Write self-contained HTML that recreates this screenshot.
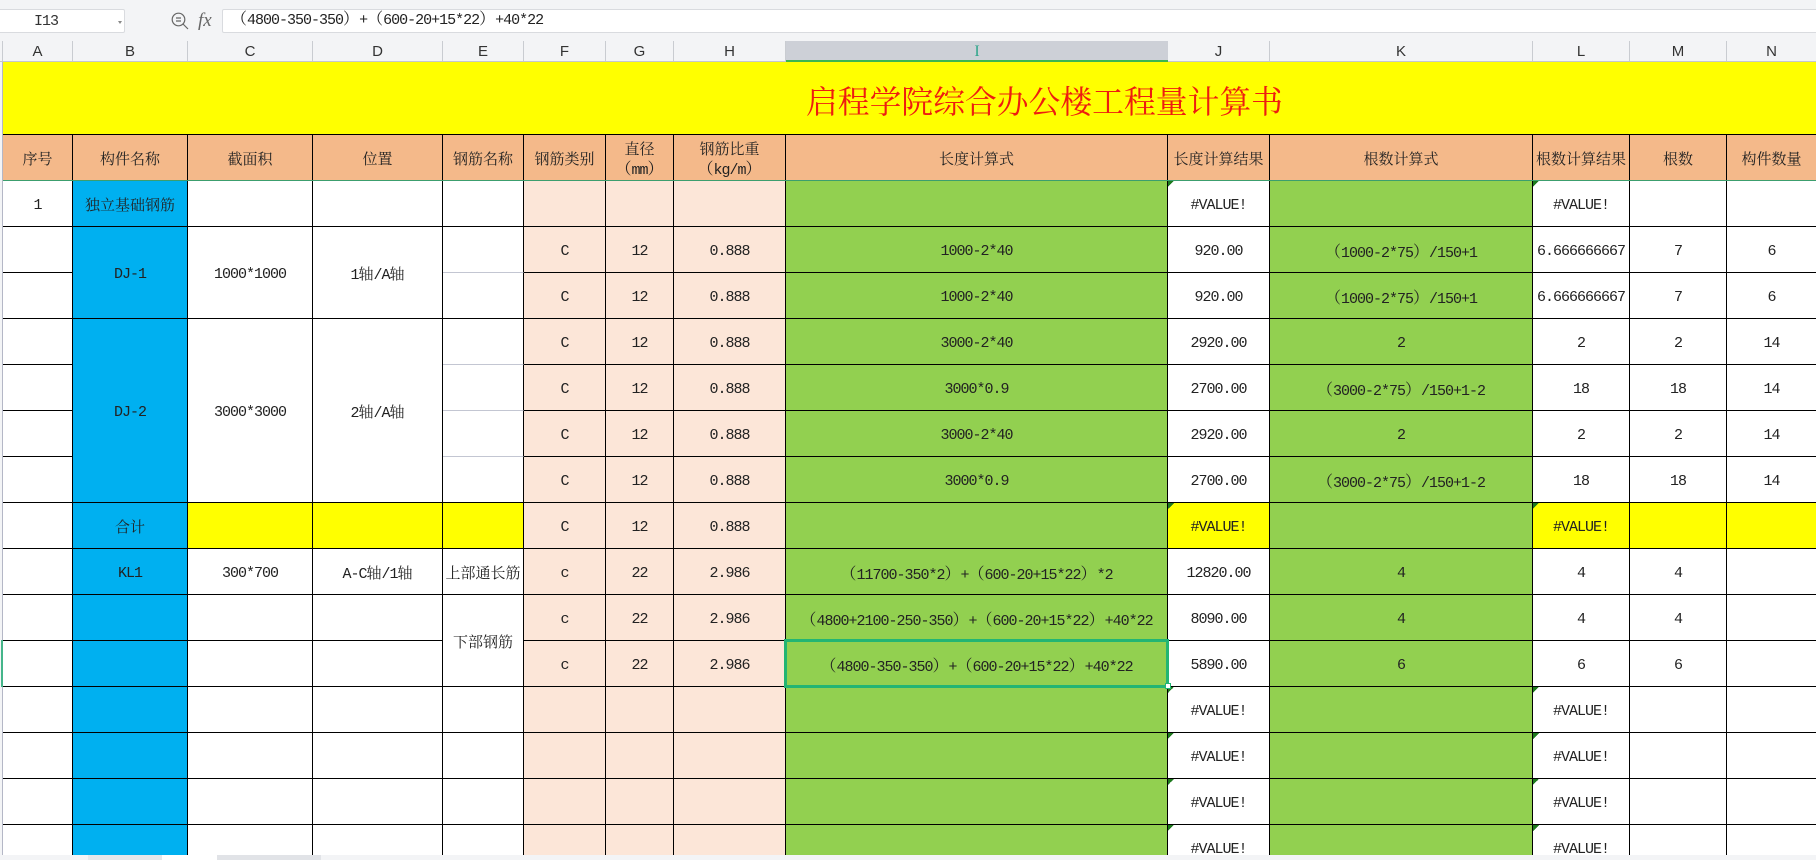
<!DOCTYPE html>
<html><head><meta charset="utf-8"><title>工程量计算书</title>
<style>
html,body{margin:0;padding:0;width:1816px;height:860px;overflow:hidden;background:#f3f4f6;position:relative}
div,span{box-sizing:border-box}
.abs{position:absolute}
.box{position:absolute;top:9px;height:24px;background:#fff;border:1px solid #d9dbdf}
#sheet{position:absolute;left:3px;top:62px;width:1813px;height:793px;overflow:hidden;background:#fff}
table{border-collapse:separate;border-spacing:0;table-layout:fixed;width:1814px;font:15px/16px "Liberation Mono","Noto Serif CJK SC",monospace;letter-spacing:-1px;color:#222}
td{padding:5px 0 0;border-right:1px solid #000;border-bottom:1px solid #000;text-align:center;vertical-align:middle;white-space:nowrap;box-sizing:border-box;height:46px;overflow:hidden}
b{font:normal 15px/16px "Noto Serif CJK SC","Liberation Serif",serif;letter-spacing:0}
i{font:normal 16px/16px "Noto Serif CJK SC","Liberation Serif",serif;letter-spacing:0}
.h{background:#f4b98a}.u{background:#00b0f0}.p{background:#fce6d8}.g{background:#92d050}.y{background:#ff0}
.t{background-image:linear-gradient(135deg,#1e7a1e 50%,transparent 50%);background-size:6px 6px;background-repeat:no-repeat}
.f{border-bottom-color:#c3c6d2}
.c{position:absolute;top:41px;height:21px;font:15px/21px "Liberation Sans",sans-serif;color:#333;text-align:center;border-right:1px solid #c9ccd1}
</style></head><body>

<div class="box" style="left:-3px;width:128px;border-radius:2px;font:15px/23px 'Liberation Mono',monospace;letter-spacing:-1px;color:#333;padding-left:36px">I13</div>
<div class="abs" style="left:118px;top:21px;width:0;height:0;border-left:2.5px solid transparent;border-right:2.5px solid transparent;border-top:3px solid #888"></div>
<svg class="abs" style="left:170px;top:11px" width="20" height="20" viewBox="0 0 20 20" fill="none" stroke="#666" stroke-width="1.2"><circle cx="8.5" cy="8.5" r="6.3"/><path d="M6 7h5M6 10h5M13 13l5 5"/></svg>
<div class="abs" style="left:198px;top:9px;font:italic 19px/24px 'Liberation Serif',serif;color:#666">fx</div>
<div class="box" style="left:222px;width:1600px;border-radius:2px;font:15px/20px 'Liberation Mono','Noto Serif CJK SC',monospace;letter-spacing:-1px;color:#222;padding-left:8px;white-space:nowrap"><i>（</i>4800-350-350<i>）</i>+<i>（</i>600-20+15*22<i>）</i>+40*22</div>

<div class="abs" style="left:2px;top:41px;width:1px;height:21px;background:#c9ccd1"></div>
<div class="c" style="left:3px;width:70px">A</div>
<div class="c" style="left:73px;width:115px">B</div>
<div class="c" style="left:188px;width:125px">C</div>
<div class="c" style="left:313px;width:130px">D</div>
<div class="c" style="left:443px;width:81px">E</div>
<div class="c" style="left:524px;width:82px">F</div>
<div class="c" style="left:606px;width:68px">G</div>
<div class="c" style="left:674px;width:112px">H</div>
<div class="c" style="left:786px;width:382px;background:#cdd0d7;border:0;border-bottom:2px solid #3cb550;color:#2ea58a;font:16px/21px 'Liberation Serif',serif">I</div>
<div class="c" style="left:1168px;width:102px">J</div>
<div class="c" style="left:1270px;width:263px">K</div>
<div class="c" style="left:1533px;width:97px">L</div>
<div class="c" style="left:1630px;width:97px">M</div>
<div class="c" style="left:1727px;width:89px;border:0">N</div>
<div class="abs" style="left:0;top:61px;width:786px;height:1px;background:#c4c7cc"></div>
<div class="abs" style="left:1168px;top:61px;width:648px;height:1px;background:#c4c7cc"></div>

<div id="sheet">
<table>
<colgroup><col style="width:70px"><col style="width:115px"><col style="width:125px"><col style="width:130px"><col style="width:81px"><col style="width:82px"><col style="width:68px"><col style="width:112px"><col style="width:382px"><col style="width:102px"><col style="width:263px"><col style="width:97px"><col style="width:97px"><col style="width:90px"></colgroup>
<tr><td colspan="14" class="y" style="height:73px;border-right:0"></td></tr>
<tr class="h">
<td><b>序号</b></td><td><b>构件名称</b></td><td><b>截面积</b></td><td><b>位置</b></td><td><b>钢筋名称</b></td><td><b>钢筋类别</b></td>
<td style="line-height:18px"><b>直径</b><br><i>（</i>mm<i>）</i></td>
<td style="line-height:18px"><b>钢筋比重</b><br><i>（</i>kg/m<i>）</i></td>
<td><b>长度计算式</b></td><td><b>长度计算结果</b></td><td><b>根数计算式</b></td><td><b>根数计算结果</b></td><td><b>根数</b></td><td><b>构件数量</b></td></tr>

<tr><td>1</td><td class="u"><b>独立基础钢筋</b></td><td></td><td></td><td></td><td class="p"></td><td class="p"></td><td class="p"></td><td class="g"></td><td class="t">#VALUE!</td><td class="g"></td><td class="t">#VALUE!</td><td></td><td></td></tr>

<tr><td></td><td class="u" rowspan="2">DJ-1</td><td rowspan="2">1000*1000</td><td rowspan="2">1<b>轴</b>/A<b>轴</b></td><td class="f"></td><td class="p">C</td><td class="p">12</td><td class="p">0.888</td><td class="g">1000-2*40</td><td>920.00</td><td class="g"><i>（</i>1000-2*75<i>）</i>/150+1</td><td>6.666666667</td><td>7</td><td>6</td></tr>
<tr><td></td><td></td><td class="p">C</td><td class="p">12</td><td class="p">0.888</td><td class="g">1000-2*40</td><td>920.00</td><td class="g"><i>（</i>1000-2*75<i>）</i>/150+1</td><td>6.666666667</td><td>7</td><td>6</td></tr>

<tr><td></td><td class="u" rowspan="4">DJ-2</td><td rowspan="4">3000*3000</td><td rowspan="4">2<b>轴</b>/A<b>轴</b></td><td class="f"></td><td class="p">C</td><td class="p">12</td><td class="p">0.888</td><td class="g">3000-2*40</td><td>2920.00</td><td class="g">2</td><td>2</td><td>2</td><td>14</td></tr>
<tr><td></td><td class="f"></td><td class="p">C</td><td class="p">12</td><td class="p">0.888</td><td class="g">3000*0.9</td><td>2700.00</td><td class="g"><i>（</i>3000-2*75<i>）</i>/150+1-2</td><td>18</td><td>18</td><td>14</td></tr>
<tr><td></td><td class="f"></td><td class="p">C</td><td class="p">12</td><td class="p">0.888</td><td class="g">3000-2*40</td><td>2920.00</td><td class="g">2</td><td>2</td><td>2</td><td>14</td></tr>
<tr><td></td><td></td><td class="p">C</td><td class="p">12</td><td class="p">0.888</td><td class="g">3000*0.9</td><td>2700.00</td><td class="g"><i>（</i>3000-2*75<i>）</i>/150+1-2</td><td>18</td><td>18</td><td>14</td></tr>

<tr><td></td><td class="u"><b>合计</b></td><td class="y"></td><td class="y"></td><td class="y"></td><td class="p">C</td><td class="p">12</td><td class="p">0.888</td><td class="g"></td><td class="y t">#VALUE!</td><td class="g"></td><td class="y t">#VALUE!</td><td class="y"></td><td class="y"></td></tr>

<tr><td></td><td class="u">KL1</td><td>300*700</td><td>A-C<b>轴</b>/1<b>轴</b></td><td><b>上部通长筋</b></td><td class="p">c</td><td class="p">22</td><td class="p">2.986</td><td class="g"><i>（</i>11700-350*2<i>）</i>+<i>（</i>600-20+15*22<i>）</i>*2</td><td>12820.00</td><td class="g">4</td><td>4</td><td>4</td><td></td></tr>
<tr><td></td><td class="u"></td><td></td><td></td><td rowspan="2"><b>下部钢筋</b></td><td class="p">c</td><td class="p">22</td><td class="p">2.986</td><td class="g"><i>（</i>4800+2100-250-350<i>）</i>+<i>（</i>600-20+15*22<i>）</i>+40*22</td><td>8090.00</td><td class="g">4</td><td>4</td><td>4</td><td></td></tr>
<tr><td></td><td class="u"></td><td></td><td></td><td class="p">c</td><td class="p">22</td><td class="p">2.986</td><td class="g"><i>（</i>4800-350-350<i>）</i>+<i>（</i>600-20+15*22<i>）</i>+40*22</td><td>5890.00</td><td class="g">6</td><td>6</td><td>6</td><td></td></tr>

<tr><td></td><td class="u"></td><td></td><td></td><td></td><td class="p"></td><td class="p"></td><td class="p"></td><td class="g"></td><td class="t">#VALUE!</td><td class="g"></td><td class="t">#VALUE!</td><td></td><td></td></tr>
<tr><td></td><td class="u"></td><td></td><td></td><td></td><td class="p"></td><td class="p"></td><td class="p"></td><td class="g"></td><td class="t">#VALUE!</td><td class="g"></td><td class="t">#VALUE!</td><td></td><td></td></tr>
<tr><td></td><td class="u"></td><td></td><td></td><td></td><td class="p"></td><td class="p"></td><td class="p"></td><td class="g"></td><td class="t">#VALUE!</td><td class="g"></td><td class="t">#VALUE!</td><td></td><td></td></tr>
<tr><td></td><td class="u"></td><td></td><td></td><td></td><td class="p"></td><td class="p"></td><td class="p"></td><td class="g"></td><td class="t">#VALUE!</td><td class="g"></td><td class="t">#VALUE!</td><td></td><td></td></tr>
</table>
</div>

<div class="abs" style="left:806px;top:80px;width:490px;font:31.8px/40px 'Noto Serif CJK SC','Liberation Serif',serif;color:#ee1c10;white-space:nowrap">启程学院综合办公楼工程量计算书</div>

<div class="abs" style="left:3px;top:180px;width:1813px;height:1px;background:#3c9e6e"></div>
<div class="abs" style="left:2px;top:62px;width:1px;height:793px;background:#b4b7c6"></div>
<div class="abs" style="left:1px;top:640px;width:2px;height:47px;background:#45b58a"></div>
<div class="abs" style="left:784px;top:639px;width:385px;height:49px;border:3px solid #22b573"></div>
<div class="abs" style="left:1165px;top:683px;width:6px;height:6px;background:#fff;border:1px solid #22b573"></div>

<div class="abs" style="left:0;top:855px;width:1816px;height:5px;background:#f3f4f6"></div>
<div class="abs" style="left:88px;top:855px;width:74px;height:5px;background:#e6e7ea"></div>
<div class="abs" style="left:162px;top:855px;width:55px;height:5px;background:#fff"></div>
<div class="abs" style="left:217px;top:855px;width:104px;height:5px;background:#e1e3e7"></div>
</body></html>
